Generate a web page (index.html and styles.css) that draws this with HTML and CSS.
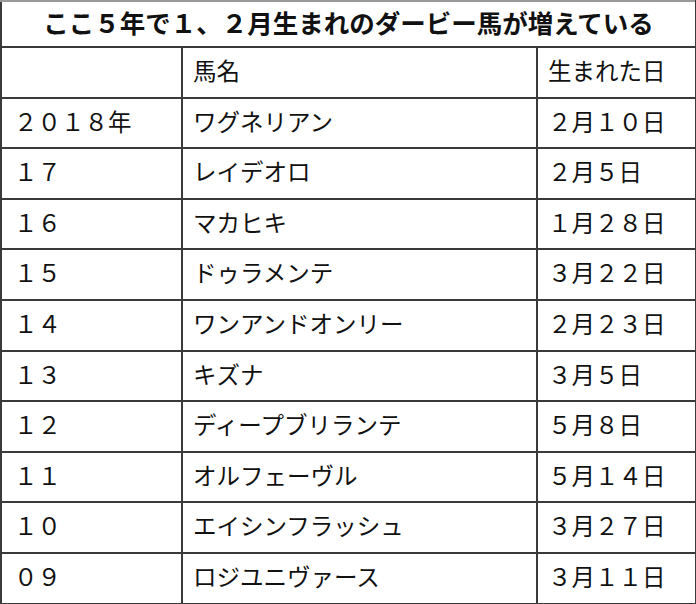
FILE: index.html
```html
<!DOCTYPE html>
<html lang="ja">
<head>
<meta charset="utf-8">
<link rel="stylesheet" href="styles.css">
</head>
<body>
<table class="tbl">
  <colgroup>
    <col class="c1"><col class="c2"><col class="c3">
  </colgroup>
  <tr class="title-row"><th colspan="3" class="title">ここ５年で１、２月生まれのダービー馬が増えている</th></tr>
  <tr class="row"><td></td><td>馬名</td><td>生まれた日</td></tr>
  <tr class="row"><td>２０１８年</td><td>ワグネリアン</td><td>２月１０日</td></tr>
  <tr class="row"><td>１７</td><td>レイデオロ</td><td>２月５日</td></tr>
  <tr class="row"><td>１６</td><td>マカヒキ</td><td>１月２８日</td></tr>
  <tr class="row"><td>１５</td><td>ドゥラメンテ</td><td>３月２２日</td></tr>
  <tr class="row"><td>１４</td><td>ワンアンドオンリー</td><td>２月２３日</td></tr>
  <tr class="row"><td>１３</td><td>キズナ</td><td>３月５日</td></tr>
  <tr class="row"><td>１２</td><td>ディープブリランテ</td><td>５月８日</td></tr>
  <tr class="row"><td>１１</td><td>オルフェーヴル</td><td>５月１４日</td></tr>
  <tr class="row"><td>１０</td><td>エイシンフラッシュ</td><td>３月２７日</td></tr>
  <tr class="row"><td>０９</td><td>ロジユニヴァース</td><td>３月１１日</td></tr>
</table>
</body>
</html>
```
FILE: styles.css
```css
html, body {
  margin: 0;
  padding: 0;
  background: #fff;
}
body {
  font-family: "Noto Sans CJK JP", "Noto Sans", sans-serif;
  color: #111;
}
.tbl {
  border-collapse: collapse;
  width: 695px;
  table-layout: fixed;
}
.c1 { width: 181px; }
.c2 { width: 355px; }
.c3 { width: 159px; }
.tbl th, .tbl td {
  border: 2px solid #3a3a3a;
  padding: 0 0 3px 10px;
  text-align: left;
  vertical-align: middle;
  font-size: 23.5px;
  font-weight: 400;
  line-height: 1;
}
.tbl td:first-child {
  padding-left: 12px;
}
.title-row { height: 46px; }
.tbl .title {
  text-align: center;
  padding: 0 0 4px 0;
  font-size: 25.5px;
  font-weight: 700;
  border-top-color: #999;
}
.row { height: 50.6px; }
```
